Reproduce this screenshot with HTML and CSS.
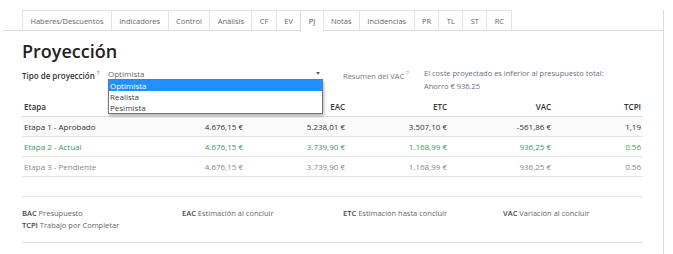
FILE: index.html
```html
<!DOCTYPE html>
<html lang="es">
<head>
    <meta charset="UTF-8">
    <title>Proyección</title>
    <link rel="stylesheet" href="styles.css">
</head>
<body>
    <div class="panel">
        <ul class="tabs">
            <li>Haberes/Descuentos</li>
            <li>Indicadores</li>
            <li>Control</li>
            <li>Análisis</li>
            <li>CF</li>
            <li>EV</li>
            <li class="active">PJ</li>
            <li>Notas</li>
            <li>Incidencias</li>
            <li>PR</li>
            <li>TL</li>
            <li>ST</li>
            <li>RC</li>
        </ul>
        <div class="content">
            <h1>Proyección</h1>
            <div class="options">
                <label class="opt-label">Tipo de proyección <sup>?</sup></label>
                <div class="select">
                    <span>Optimista</span>
                    <span class="caret"></span>
                    <ul class="listbox">
                        <li class="hl">Optimista</li>
                        <li>Realista</li>
                        <li>Pesimista</li>
                    </ul>
                </div>
                <label class="vac-label">Resumen del VAC <sup>?</sup></label>
                <div class="vac-text">
                    El coste proyectado es inferior al presupuesto total:<br>
                    Ahorro € 936.25
                </div>
            </div>
            <table class="stages">
                <colgroup>
                    <col class="c-name">
                    <col class="c-num">
                    <col class="c-num">
                    <col class="c-num">
                    <col class="c-vac">
                    <col>
                </colgroup>
                <thead>
                    <tr>
                        <th class="left">Etapa</th>
                        <th>BAC</th>
                        <th>EAC</th>
                        <th>ETC</th>
                        <th>VAC</th>
                        <th>TCPI</th>
                    </tr>
                </thead>
                <tbody>
                    <tr class="approved">
                        <td class="left">Etapa 1 - Aprobado</td>
                        <td>4.676,15 €</td>
                        <td>5.238,01 €</td>
                        <td>3.507,10 €</td>
                        <td>-561,86 €</td>
                        <td>1,19</td>
                    </tr>
                    <tr class="current">
                        <td class="left">Etapa 2 - Actual</td>
                        <td>4.676,15 €</td>
                        <td>3.739,90 €</td>
                        <td>1.168,99 €</td>
                        <td>936,25 €</td>
                        <td>0.56</td>
                    </tr>
                    <tr class="pending">
                        <td class="left">Etapa 3 - Pendiente</td>
                        <td>4.676,15 €</td>
                        <td>3.739,90 €</td>
                        <td>1.168,99 €</td>
                        <td>936,25 €</td>
                        <td>0.56</td>
                    </tr>
                </tbody>
            </table>
            <div class="legend">
                <div><b>BAC</b> Presupuesto</div>
                <div><b>EAC</b> Estimación al concluir</div>
                <div><b>ETC</b> Estimación hasta concluir</div>
                <div><b>VAC</b> Variación al concluir</div>
                <div><b>TCPI</b> Trabajo por Completar</div>
            </div>
        </div>
    </div>
</body>
</html>
```

FILE: styles.css
```css
body{
    margin:0;
    padding:10px 0 0 3px;
    font-family:'Open Sans',sans-serif;
    font-size:8px;
    color:#333;
    background-color:#fff;
}
.panel{
    width:660px;
    height:244px;
    border-right:1px solid #dcdcdc;
}
.tabs{
    list-style:none;
    margin:0;
    padding:0 0 0 19px;
    display:flex;
    border-bottom:1px solid #dcdcdc;
    height:20px;
    font-size:7.5px;
}
.tabs li{
    height:20px;
    line-height:20px;
    padding:0 7.4px;
    border:1px solid #e4e4e4;
    border-bottom:none;
    border-right:none;
    color:#666;
}
.tabs li:last-child{
    border-right:1px solid #e4e4e4;
}
.tabs li.active{
    color:#3d4f6b;
    background-color:#fff;
    height:21px;
    border-color:#dcdcdc;
}
.content{
    padding:0 21px 0 19px;
}
h1{
    margin:9px 0 0 0;
    font-size:18px;
    line-height:22px;
    font-weight:600;
    color:#222;
}
sup{
    font-size:6px;
    color:#888;
}
.options{
    display:grid;
    grid-template-columns:86px 215px 101px 1fr;
    margin-top:5px;
    line-height:13px;
}
.opt-label{
    font-weight:600;
}
.select{
    position:relative;
    display:flex;
    justify-content:space-between;
    color:#666;
    height:13px;
}
.caret{
    width:0;
    height:0;
    margin:5px 3px 0 0;
    border-left:2.5px solid transparent;
    border-right:2.5px solid transparent;
    border-top:3px solid #666;
}
.listbox{
    position:absolute;
    top:12px;
    left:0;
    width:213px;
    margin:0;
    padding:0;
    list-style:none;
    background-color:#fff;
    border:1px solid #767676;
    box-shadow:1px 2px 3px rgba(0,0,0,0.3);
    color:#444;
    z-index:2;
}
.listbox li{
    height:11px;
    line-height:11px;
    padding-left:1px;
}
.listbox li.hl{
    background-color:#1e90ff;
    color:#fff;
}
.vac-label{
    color:#777;
    margin-left:20px;
    font-size:7.5px;
}
.vac-text{
    color:#5f7282;
    font-size:7.5px;
}
.stages{
    width:621px;
    border-collapse:collapse;
    table-layout:fixed;
    margin-top:3px;
}
.c-name{
    width:121px;
}
.c-num{
    width:102px;
}
.c-vac{
    width:104px;
}
.stages th,.stages td{
    text-align:right;
    padding:0 2px;
    height:19px;
    border-bottom:1px solid #e4e4e4;
    white-space:nowrap;
}
.stages th{
    height:20px;
    font-weight:600;
    border-bottom:1px solid #dcdcdc;
}
.stages .left{
    text-align:left;
}
.approved{
    background-color:#fafafa;
    color:#333;
}
.current{
    color:#3a9a5e;
}
.pending{
    color:#888;
}
.legend{
    display:grid;
    grid-template-columns:160px 161px 160px 140px;
    width:621px;
    margin-top:19px;
    padding:10px 0 11px 0;
    border-top:1px solid #e4e4e4;
    border-bottom:1px solid #dcdcdc;
    line-height:12px;
    color:#666;
    font-size:7.5px;
}
.legend b{
    font-weight:600;
    color:#444;
}
```
